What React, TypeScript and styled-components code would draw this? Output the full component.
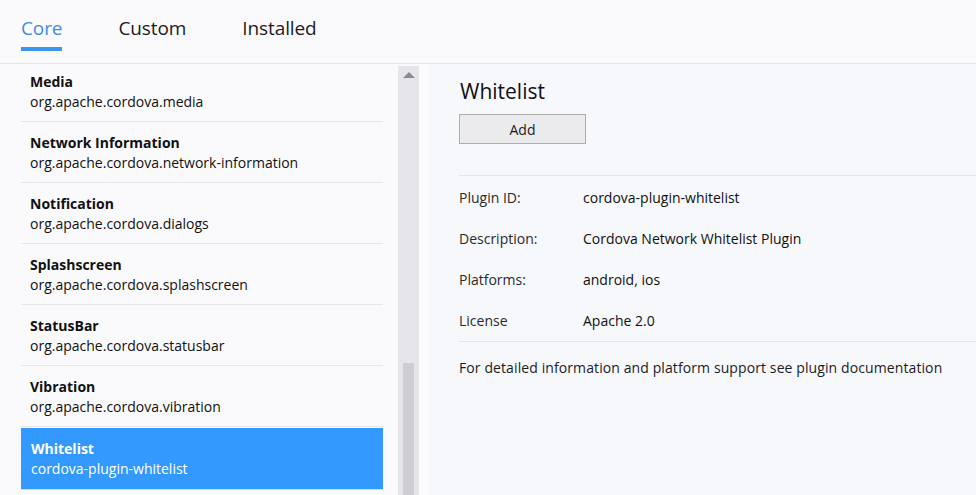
import React from "react";
import styled, { createGlobalStyle } from "styled-components";

const Global = createGlobalStyle`
  html, body { margin: 0; padding: 0; background: #fafafd; }
  body { font-family: "Open Sans", "Noto Sans", sans-serif; color: #111; }
  * { box-sizing: border-box; }
`;

const Page = styled.div`
  width: 976px;
  height: 495px;
  display: flex;
  flex-direction: column;
  overflow: hidden;
  background: #fafafd;
`;

const Header = styled.div`
  height: 64px;
  flex: none;
  border-bottom: 1px solid #e4e4e8;
  display: flex;
  gap: 56px;
  padding-left: 21px;
`;

const Tab = styled.div<{ $active?: boolean }>`
  position: relative;
  font-size: 19px;
  line-height: 26px;
  padding-top: 15px;
  letter-spacing: -0.1px;
  color: ${(p) => (p.$active ? "#3a8ee6" : "#1c1c1c")};
  &::after {
    content: "";
    display: ${(p) => (p.$active ? "block" : "none")};
    height: 4px;
    margin-top: 6px;
    background: #3a94f0;
  }
`;

const Body = styled.div`
  flex: 1;
  display: flex;
  min-height: 0;
`;

const ListPane = styled.div`
  width: 398px;
  flex: none;
  padding-left: 21px;
  padding-right: 15px;
  overflow: hidden;
`;

const ListInner = styled.div`
  margin-top: -3px;
`;

const Item = styled.div<{ $selected?: boolean }>`
  height: ${(p) => (p.$selected ? "62px" : "61px")};
  margin-top: ${(p) => (p.$selected ? "1px" : "0")};
  padding: 11px 9px 0 ${(p) => (p.$selected ? "10px" : "9px")};
  border-bottom: 1px solid ${(p) => (p.$selected ? "#f0d9a0" : "#e6e6ea")};
  background: ${(p) => (p.$selected ? "#3399ff" : "transparent")};
  color: ${(p) => (p.$selected ? "#fff" : "#111")};
`;

const ItemTitle = styled.div`
  font-size: 14px;
  font-weight: 700;
  line-height: 20px;
`;

const ItemSub = styled.div`
  font-size: 14px;
  line-height: 20px;
`;

const ScrollTrack = styled.div`
  width: 21px;
  flex: none;
  margin-top: 2px;
  background: #e6e6ea;
  display: flex;
  flex-direction: column;
  align-items: center;
`;

const Arrow = styled.div`
  width: 0;
  height: 0;
  margin-top: 6px;
  border-left: 6px solid transparent;
  border-right: 6px solid transparent;
  border-bottom: 6px solid #8a8a96;
`;

const Thumb = styled.div`
  width: 11px;
  margin-top: auto;
  height: 132px;
  background: #cdcdd2;
`;

const Gap = styled.div`
  width: 10px;
  flex: none;
  background: #fbfbfd;
`;

const Detail = styled.div`
  flex: 1;
  background: #f7f8fc;
  padding: 12px 0 0 30px;
`;

const Title = styled.div`
  font-size: 21px;
  line-height: 30px;
  color: #111;
  padding-left: 1px;
`;

const AddButton = styled.button`
  margin-top: 8px;
  width: 127px;
  height: 30px;
  background: #ebebee;
  border: 1px solid #adadad;
  font-family: inherit;
  font-size: 14px;
  color: #1c1c1c;
  padding: 0;
`;

const Section = styled.div`
  margin-top: 31px;
  border-top: 1px solid #e4e4e8;
  border-bottom: 1px solid #e4e4e8;
  padding: 1px 0 0;
`;

const Row = styled.div`
  display: grid;
  grid-template-columns: 124px 1fr;
  height: 41px;
  align-items: center;
  font-size: 14px;
`;

const Label = styled.span`
  color: #2a2a2a;
`;

const Value = styled.span`
  color: #111;
`;

const Note = styled.div`
  font-size: 14px;
  line-height: 20px;
  padding-top: 16px;
  color: #1c1c1c;
  letter-spacing: 0.1px;
`;

const items = [
  { t: "Media", s: "org.apache.cordova.media" },
  { t: "Network Information", s: "org.apache.cordova.network-information" },
  { t: "Notification", s: "org.apache.cordova.dialogs" },
  { t: "Splashscreen", s: "org.apache.cordova.splashscreen" },
  { t: "StatusBar", s: "org.apache.cordova.statusbar" },
  { t: "Vibration", s: "org.apache.cordova.vibration" },
  { t: "Whitelist", s: "cordova-plugin-whitelist", sel: true },
];

const rows = [
  ["Plugin ID:", "cordova-plugin-whitelist"],
  ["Description:", "Cordova Network Whitelist Plugin"],
  ["Platforms:", "android, ios"],
  ["License", "Apache 2.0"],
];

export default function App() {
  return (
    <Page>
      <Global />
      <Header>
        <Tab $active>Core</Tab>
        <Tab>Custom</Tab>
        <Tab>Installed</Tab>
      </Header>
      <Body>
        <ListPane>
          <ListInner>
            {items.map((it) => (
              <Item key={it.t} $selected={it.sel}>
                <ItemTitle>{it.t}</ItemTitle>
                <ItemSub>{it.s}</ItemSub>
              </Item>
            ))}
          </ListInner>
        </ListPane>
        <ScrollTrack>
          <Arrow />
          <Thumb />
        </ScrollTrack>
        <Gap />
        <Detail>
          <Title>Whitelist</Title>
          <AddButton>Add</AddButton>
          <Section>
            {rows.map(([l, v]) => (
              <Row key={l}>
                <Label>{l}</Label>
                <Value>{v}</Value>
              </Row>
            ))}
          </Section>
          <Note>For detailed information and platform support see plugin documentation</Note>
        </Detail>
      </Body>
    </Page>
  );
}
